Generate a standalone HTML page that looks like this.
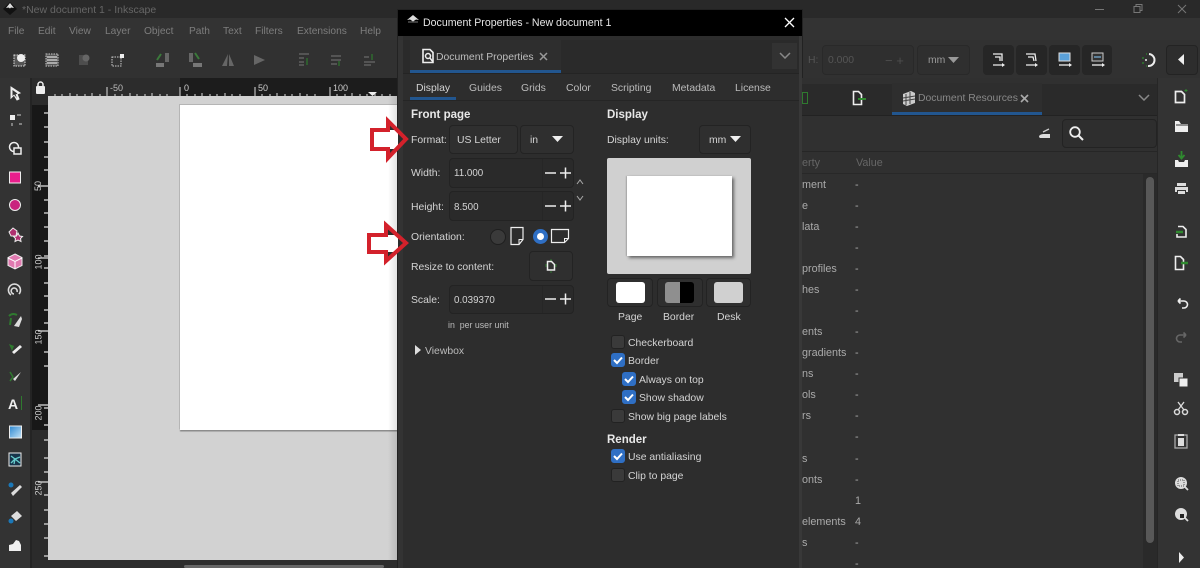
<!DOCTYPE html>
<html><head><meta charset="utf-8"><style>
html,body{margin:0;padding:0;background:#2d2d2d}
#r{position:relative;width:1200px;height:568px;overflow:hidden;background:#2d2d2d;font:10.4px "Liberation Sans",sans-serif;color:#ddd}
#r div,#r span,#r svg{position:absolute}
.t{white-space:nowrap;line-height:14px;height:14px;transform:translateY(-6px)}
.m{color:#7d7d7d;font-size:10.2px;transform:translateY(-5px)}
.d{color:#d4d4d4;transform:translateY(-5px)}
.n{color:#d4d4d4;font-size:9.8px;transform:translateY(-5px)}
.b{font-weight:bold;color:#e8e8e8;font-size:11.5px}
.box{background:#2f2f2f;border:1px solid #232323;border-radius:4px;box-sizing:border-box}
.cb{width:14px;height:14px;border-radius:3px;background:#3a3a3a;border:1px solid #222;box-sizing:border-box}
.ck{background:#2f6fc4;border-color:#2f6fc4}
.v{color:#aaa;font-size:10.8px}
.rl{font-size:9px;color:#ccc;transform:translate(-1px,-7px) rotate(-90deg)}
</style></head><body><div id="r">

<!-- window title bar -->
<div style="left:0;top:0;width:1200px;height:18px;background:#292929"></div>
<svg style="left:2px;top:1px" width="16" height="15" viewBox="0 0 16 15"><path d="M8 1 L15 8 L8 14 L1 8Z" fill="#111"/><path d="M8 2 L12 7 L9 6.500 L8 7.500 L6.500 6.500 L4 7Z" fill="#ddd"/></svg>
<div class="t m" style="left:22px;top:8px;font-size:10.500px;color:#666">*New document 1 - Inkscape</div>
<svg style="left:1090px;top:2px" width="100" height="14" viewBox="0 0 100 14" fill="none" stroke="#777"><path d="M5 7.500H14"/><path d="M44 4.500h6v6h-6zM46 4.500v-2h6v6h-2"/><path d="M88 3l8 8M96 3l-8 8"/></svg>

<!-- menu -->
<div style="left:0;top:18px;width:1200px;height:22px;background:#333"></div>
<div class="t m" style="left:8px;top:30px">File</div>
<div class="t m" style="left:38px;top:30px">Edit</div>
<div class="t m" style="left:69px;top:30px">View</div>
<div class="t m" style="left:105px;top:30px">Layer</div>
<div class="t m" style="left:144px;top:30px">Object</div>
<div class="t m" style="left:189px;top:30px">Path</div>
<div class="t m" style="left:223px;top:30px">Text</div>
<div class="t m" style="left:255px;top:30px">Filters</div>
<div class="t m" style="left:297px;top:30px">Extensions</div>
<div class="t m" style="left:360px;top:30px">Help</div>

<!-- toolbar -->
<div style="left:0;top:40px;width:1200px;height:38px;background:#313131"></div>
<svg style="left:0;top:40px" width="400" height="38" viewBox="0 0 400 38">
<rect x="14" y="15" width="11" height="11" fill="#555" stroke="#ddd" stroke-dasharray="1.500 1"/><circle cx="21" cy="18" r="4" fill="#eee"/>
<rect x="46" y="14" width="12" height="12" fill="#555" stroke="#ccc" stroke-dasharray="1.500 1"/><path d="M47 17h10M47 20h10M47 23h10" stroke="#ddd" stroke-width="1.300"/>
<rect x="79" y="15" width="9" height="10" fill="#4d4d4d"/><circle cx="86" cy="18" r="3.500" fill="#666"/>
<rect x="112" y="17" width="9" height="9" fill="none" stroke="#ccc" stroke-dasharray="1.500 1"/><rect x="120" y="14" width="4" height="4" fill="#eee"/>
<rect x="156" y="23" width="8" height="4" fill="#777"/><rect x="165" y="13" width="4" height="9" fill="#666"/><path d="M157 20l4-6" stroke="#3b7a3b" stroke-width="2"/>
<rect x="189" y="13" width="4" height="9" fill="#666"/><rect x="193" y="23" width="9" height="4" fill="#777"/><path d="M195 13l4 6" stroke="#3b7a3b" stroke-width="2"/>
<path d="M228 14l-6 12h5zM229 14l5 12h-5z" fill="#666"/>
<path d="M254 15l11 5-11 5z" fill="#666"/>
<path d="M299 14h10M299 18h5M299 22h5M299 25h5" stroke="#6a6a6a" stroke-width="1.300"/><path d="M307 25v-7" stroke="#2f6b2f" stroke-width="1.500"/>
<path d="M331 16h10M331 20h10M331 24h6" stroke="#6a6a6a" stroke-width="1.300"/><path d="M339 26v-5" stroke="#2f6b2f" stroke-width="1.500"/>
<path d="M364 22h11M364 25h7M364 17h5" stroke="#6a6a6a" stroke-width="1.300"/><path d="M372 20v-6" stroke="#2f6b2f" stroke-width="1.500"/>
</svg>

<div class="box" style="left:822px;top:45px;width:92px;height:30px;border-color:#292929"></div>
<div class="t" style="left:808px;top:60px;color:#555">H:</div>
<div class="t" style="left:828px;top:60px;color:#555">0.000</div>
<div class="t" style="left:885px;top:60px;color:#4d4d4d;font-size:13px">− +</div>
<div class="box" style="left:917px;top:45px;width:53px;height:30px;border-color:#292929"></div>
<div class="t" style="left:928px;top:60px;color:#999">mm</div>
<svg style="left:948px;top:57px" width="12" height="7"><path d="M0 0h11l-5.500 6z" fill="#999"/></svg>
<div style="left:983px;top:45px;width:31px;height:30px;background:#262626;border-radius:4px"></div>
<div style="left:1016px;top:45px;width:31px;height:30px;background:#262626;border-radius:4px"></div>
<div style="left:1049px;top:45px;width:31px;height:30px;background:#262626;border-radius:4px"></div>
<div style="left:1082px;top:45px;width:30px;height:30px;background:#262626;border-radius:4px"></div>
<svg style="left:983px;top:45px" width="130" height="30" viewBox="0 0 130 30" fill="none">
<path d="M10 9h9v7M12 12h5v4M10 20h10" stroke="#eee" stroke-width="1.300"/><path d="M19 18l3 2-3 2z" fill="#eee"/>
<path d="M43 9h9l1 7M45 12h5l1 4M43 20h10" stroke="#eee" stroke-width="1.300"/><path d="M52 18l3 2-3 2z" fill="#eee"/>
<rect x="76" y="8" width="11" height="8" fill="#5aa0d8" stroke="#ddd"/><path d="M76 20h11" stroke="#eee" stroke-width="1.300"/><path d="M86 18l3 2-3 2z" fill="#eee"/>
<rect x="109" y="8" width="11" height="8" fill="#333" stroke="#ccc"/><path d="M111 12h7" stroke="#8cf"/><path d="M109 20h11" stroke="#eee" stroke-width="1.300"/><path d="M119 18l3 2-3 2z" fill="#eee"/>
</svg>
<svg style="left:1141px;top:51px" width="18" height="18" viewBox="0 0 18 18" fill="none"><path d="M8 3a6 6 0 1 1-1 12" stroke="#eee" stroke-width="2"/><path d="M4 9h2" stroke="#eee" stroke-width="1.500"/><path d="M2 6v2M2 11v2M5 15h1M5 3h1" stroke="#2f7a2f" stroke-width="1.500"/></svg>
<div class="box" style="left:1166px;top:45px;width:32px;height:30px;background:#2d2d2d"></div>
<svg style="left:1178px;top:54px" width="8" height="12"><path d="M6 0v11L0 5.500z" fill="#eee"/></svg>

<!-- left toolbox -->
<div style="left:0;top:78px;width:30px;height:490px;background:#333"></div>
<div style="left:30px;top:78px;width:2px;height:490px;background:#242424"></div>
<svg style="left:0;top:78px" width="30" height="490" viewBox="0 78 30 490">
<defs><linearGradient id="g" x1="0" y1="0" x2="1" y2="1"><stop offset="0" stop-color="#2a86d0"/><stop offset="1" stop-color="#c5e4f7"/></linearGradient></defs>
<path d="M11 87l9 6-3 1 2 5-2 1-3-5-3 3z" fill="#eee" stroke="#eee"/><path d="M12.500 90l5 3.500-2 1 1.500 3.500-3-3.500-1.500 1.500z" fill="#333"/>
<rect x="10" y="115" width="5" height="5" fill="#eee"/><path d="M17 115h4M19 124h3M12 123v3" stroke="#ccc"/>
<circle cx="14" cy="147" r="4.500" fill="none" stroke="#eee" stroke-width="1.500"/><rect x="14" y="148" width="7" height="6" fill="#333" stroke="#eee" stroke-width="1.500"/>
<rect x="9.500" y="172" width="11" height="11" fill="#e91e8c" stroke="#eee"/>
<circle cx="15" cy="205" r="5.500" fill="#c9237e" stroke="#eee"/>
<path d="M9 232l4-4 4 3-1 5h-5z" fill="#b03070" stroke="#eee"/><path d="M18 233l1.500 3 3 .5-2 2 .5 3-3-1.500-3 1.500.5-3-2-2 3-.5z" fill="#b03070" stroke="#eee"/>
<path d="M15 254l7 3.500v8L15 269l-7-3.500v-8z" fill="#e07ab0" stroke="#eee"/><path d="M8 258l7 3.500 7-3.500M15 261.500v7" stroke="#fff" fill="none"/>
<path d="M19 294a6 6 0 1 0-8 1M17 292a3 3 0 1 0-3 2" fill="none" stroke="#ddd" stroke-width="1.600"/>
<path d="M14 326l7-10 1 3-3 8z" fill="#ddd"/><path d="M9 316c3-3 6-2 8-1M11 318l-1 7" stroke="#2f7a2f" stroke-width="2" fill="none"/>
<path d="M12 352l8-7 2 2-8 7z" fill="#eee"/><path d="M9 344l5 2-2 5z" fill="#2f7a2f"/>
<path d="M13 379l8-7-6 9z" fill="#ddd"/><path d="M10 372l3 5-3 4" stroke="#2f7a2f" stroke-width="1.500" fill="none"/>
<rect x="9.500" y="426" width="12" height="12" fill="url(#g)" stroke="#eee"/>
<rect x="9" y="453" width="12" height="13" fill="#17344a" stroke="#eee"/><path d="M15 459l-4-3M15 459l5-2M15 459l-1 5M15 459l5 4M15 459l-4 4" stroke="#6cc" stroke-width="1.300"/>
<path d="M11 493l9-8 2 2-9 9z" fill="#ddd"/><circle cx="11" cy="485" r="2.500" fill="#1b78b8"/>
<path d="M11 516l6-5 5 5-6 5z" fill="#ddd"/><circle cx="11" cy="521" r="2.500" fill="#1b78b8"/>
<path d="M9 551v-6l4-1 3-4 3 1 2 4v6z" fill="#eee"/>
</svg>
<div class="t" style="left:8px;top:403px;font-size:14px;font-weight:bold;color:#eee">A</div>
<div style="left:21px;top:396px;width:1px;height:14px;background:#2f7a2f"></div>

<!-- rulers -->
<div style="left:32px;top:78px;width:368px;height:18px;background:#2c2c2c"></div>
<div style="left:180px;top:78px;width:220px;height:18px;background:#1c1c1c"></div>
<div style="left:32px;top:96px;width:16px;height:464px;background:#2b2b2b"></div>
<div style="left:32px;top:105px;width:16px;height:325px;background:#181818"></div>
<svg style="left:32px;top:78px" width="368" height="482" viewBox="32 78 368 482">
<path d="M55 96v-2M62 96v-2M70 96v-3M77 96v-2M85 96v-2M92 96v-3M100 96v-2M107 96v-9M115 96v-2M122 96v-2M130 96v-3M137 96v-2M145 96v-2M152 96v-3M160 96v-2M167 96v-2M180 96v-9M187 96v-2M195 96v-2M202 96v-3M210 96v-2M217 96v-2M225 96v-3M232 96v-2M240 96v-2M255 96v-9M262 96v-2M270 96v-2M277 96v-3M285 96v-2M292 96v-2M300 96v-3M307 96v-2M315 96v-2M330 96v-9M337 96v-2M345 96v-2M352 96v-3M360 96v-2M367 96v-2M375 96v-3M382 96v-2M390 96v-2" stroke="#ddd"/>
<path d="M368 92h9l-4.500 4z" fill="#eee"/>
<path d="M44 113h4M44 127h4M44 142h4M44 157h4M44 170h4M38 186h10M44 200h4M44 213h4M44 227h4M44 241h4M44 256h4M38 258h10M44 268h4M44 283h4M44 296h4M44 310h4M44 323h4M38 331h10M44 352h4M44 366h4M38 405h10M44 408h4M44 425h4M44 440h4M44 458h4M44 472h4M38 482h10M44 495h4M44 510h4M44 524h4M44 538h4M44 556h4" stroke="#ddd" stroke-width="1.200"/>
</svg>
<div class="t" style="left:110px;top:88px;font-size:9px;color:#bbb;transform:translateY(-7px)">-50</div>
<div class="t" style="left:184px;top:88px;font-size:9px;color:#ccc;transform:translateY(-7px)">0</div>
<div class="t" style="left:258px;top:88px;font-size:9px;color:#ccc;transform:translateY(-7px)">50</div>
<div class="t" style="left:333px;top:88px;font-size:9px;color:#ccc;transform:translateY(-7px)">100</div>
<div class="t rl" style="left:34px;top:186px">50</div>
<div class="t rl" style="left:32px;top:262px">100</div>
<div class="t rl" style="left:32px;top:337px">150</div>
<div class="t rl" style="left:32px;top:413px">200</div>
<div class="t rl" style="left:32px;top:488px">250</div>
<svg style="left:35px;top:81px" width="11" height="13" viewBox="0 0 11 13"><rect x="1" y="5" width="9" height="8" rx="1" fill="#eee"/><path d="M3 6V3.500a2.500 2.500 0 0 1 5 0V6" fill="none" stroke="#eee" stroke-width="1.500"/></svg>

<!-- canvas -->
<div style="left:48px;top:96px;width:352px;height:464px;background:#d2d2d2"></div>
<div style="left:180px;top:105px;width:220px;height:325px;background:#fff;box-shadow:-1px -1px 0 #b5b5b5,0 1.500px 1px #8a8a8a"></div>
<div style="left:388px;top:96px;width:10px;height:464px;background:linear-gradient(90deg,rgba(0,0,0,0),rgba(0,0,0,.12))"></div>
<div style="left:48px;top:560px;width:352px;height:8px;background:#2d2d2d"></div>
<div style="left:184px;top:565px;width:200px;height:3px;background:#666;border-radius:2px"></div>

<!-- dialog -->
<div style="left:398px;top:10px;width:404px;height:558px;background:#2d2d2d;box-shadow:0 0 0 1px #222"></div>
<div style="left:398px;top:10px;width:404px;height:26px;background:#000"></div>
<svg style="left:406px;top:15px" width="14" height="10" viewBox="0 0 14 10"><path d="M7 0l6 5-3-.500-3 2-3-2-3 .500z" fill="#ddd"/><path d="M2 7h10" stroke="#777"/></svg>
<div class="t" style="left:423px;top:22px;color:#e6e6e6;font-size:10.600px">Document Properties - New document 1</div>
<svg style="left:784px;top:17px" width="11" height="11"><path d="M1 1l9 9M10 1l-9 9" stroke="#fff" stroke-width="1.300"/></svg>

<div style="left:398px;top:36px;width:5px;height:532px;background:#333"></div>
<div style="left:403px;top:40px;width:396px;height:33px;background:#2a2a2a"></div>
<div style="left:410px;top:40px;width:151px;height:33px;background:#2e2e2e"></div>
<div style="left:410px;top:70px;width:151px;height:3px;background:#22568f"></div>
<div style="left:403px;top:73px;width:396px;height:1px;background:#242424"></div>
<svg style="left:421px;top:48px" width="14" height="16" viewBox="0 0 14 16" fill="none"><path d="M2 1.500h7l3 3v10H2z" stroke="#eee" stroke-width="1.600"/><circle cx="7" cy="8" r="2.500" stroke="#eee" stroke-width="1.500"/><path d="M9 10l3 4" stroke="#eee" stroke-width="1.500"/></svg>
<div class="t d" style="left:436px;top:56px;color:#bdbdbd">Document Properties</div>
<svg style="left:539px;top:52px" width="9" height="9"><path d="M1 1l7 7M8 1l-7 7" stroke="#999" stroke-width="1.500"/></svg>
<div style="left:772px;top:43px;width:25px;height:26px;background:#323232"></div>
<svg style="left:779px;top:52px" width="12" height="7"><path d="M1 1l5 5 5-5" fill="none" stroke="#888" stroke-width="1.500"/></svg>

<div class="t d" style="left:416px;top:87px">Display</div>
<div class="t d" style="left:469px;top:87px;color:#bbb">Guides</div>
<div class="t d" style="left:521px;top:87px;color:#bbb">Grids</div>
<div class="t d" style="left:566px;top:87px;color:#bbb">Color</div>
<div class="t d" style="left:611px;top:87px;color:#bbb">Scripting</div>
<div class="t d" style="left:672px;top:87px;color:#bbb">Metadata</div>
<div class="t d" style="left:735px;top:87px;color:#bbb">License</div>
<div style="left:410px;top:97px;width:46px;height:3px;background:#22568f"></div>
<div style="left:403px;top:100px;width:396px;height:1px;background:#252525"></div>

<div class="t b" style="left:411px;top:114px">Front page</div>
<div class="t b" style="left:607px;top:114px">Display</div>

<div class="t d" style="left:411px;top:139px">Format:</div>
<div class="box" style="left:449px;top:125px;width:69px;height:29px"></div>
<div class="t d" style="left:457px;top:139px">US Letter</div>
<div class="box" style="left:520px;top:125px;width:54px;height:29px"></div>
<div class="t d" style="left:530px;top:139px">in</div>
<svg style="left:552px;top:136px" width="11" height="6"><path d="M0 0h11L5.500 6z" fill="#eee"/></svg>

<div class="t d" style="left:411px;top:172px">Width:</div>
<div class="box" style="left:449px;top:158px;width:125px;height:30px;background:#2a2a2a"></div>
<div class="t n" style="left:454px;top:172px">11.000</div>
<div style="left:542px;top:159px;width:1px;height:28px;background:#262626"></div>
<svg style="left:544px;top:166px" width="28" height="14"><path d="M1 7h11M16 7h11M21.500 1.500v11" stroke="#eee" stroke-width="1.500"/></svg>

<svg style="left:576px;top:178px" width="8" height="24"><path d="M1 6l3-4 3 4M1 18l3 4 3-4" fill="none" stroke="#aaa"/></svg>

<div class="t d" style="left:411px;top:206px">Height:</div>
<div class="box" style="left:449px;top:191px;width:125px;height:30px;background:#2a2a2a"></div>
<div class="t n" style="left:454px;top:206px">8.500</div>
<div style="left:542px;top:192px;width:1px;height:28px;background:#262626"></div>
<svg style="left:544px;top:199px" width="28" height="14"><path d="M1 7h11M16 7h11M21.500 1.500v11" stroke="#eee" stroke-width="1.500"/></svg>

<div class="t d" style="left:411px;top:236px">Orientation:</div>
<div style="left:490px;top:229px;width:14px;height:14px;border-radius:50%;background:#3a3a3a;border:1px solid #1f1f1f"></div>
<svg style="left:509px;top:226px" width="16" height="20" viewBox="0 0 16 20" fill="none"><path d="M2 1.500h12v12l-4 5H2z" stroke="#eee" stroke-width="1.200"/><path d="M14 13.500h-4v5" stroke="#eee"/></svg>
<div style="left:533px;top:229px;width:15px;height:15px;border-radius:50%;background:#2f6fc4"></div>
<div style="left:537px;top:233px;width:7px;height:7px;border-radius:50%;background:#fff"></div>
<svg style="left:550px;top:228px" width="20" height="16" viewBox="0 0 20 16" fill="none"><path d="M1.500 1.500h17v9l-4 4h-13z" stroke="#eee" stroke-width="1.200"/><path d="M18.500 10.500h-4v4" stroke="#eee"/></svg>

<div class="t d" style="left:411px;top:266px">Resize to content:</div>
<div class="box" style="left:529px;top:251px;width:44px;height:30px"></div>
<svg style="left:544px;top:259px" width="14" height="14" viewBox="0 0 14 14"><path d="M3.500 2.500h4l3 3v5.500h-7z" fill="#333" stroke="#eee" stroke-width="1.500"/><path d="M2 5v3M12 5v3M6 1h2M6 13h2" stroke="#2f7a2f"/></svg>

<div class="t d" style="left:411px;top:299px">Scale:</div>
<div class="box" style="left:449px;top:285px;width:125px;height:29px;background:#2a2a2a"></div>
<div class="t n" style="left:454px;top:299px">0.039370</div>
<div style="left:542px;top:286px;width:1px;height:27px;background:#262626"></div>
<svg style="left:544px;top:292px" width="28" height="14"><path d="M1 7h11M16 7h11M21.500 1.500v11" stroke="#eee" stroke-width="1.500"/></svg>
<div class="t" style="left:448px;top:324px;font-size:8.800px;color:#bbb">in&nbsp; per user unit</div>
<svg style="left:415px;top:345px" width="6" height="10"><path d="M0 0l6 5-6 5z" fill="#ddd"/></svg>
<div class="t d" style="left:425px;top:350px;color:#bbb">Viewbox</div>

<div class="t d" style="left:607px;top:139px">Display units:</div>
<div class="box" style="left:699px;top:125px;width:52px;height:29px"></div>
<div class="t d" style="left:709px;top:139px">mm</div>
<svg style="left:730px;top:136px" width="11" height="6"><path d="M0 0h11L5.500 6z" fill="#eee"/></svg>

<div style="left:607px;top:158px;width:144px;height:116px;background:#d0d0d0;border-radius:2px"></div>
<div style="left:627px;top:176px;width:105px;height:80px;background:#fff;box-shadow:2px 2px 3px #666,-1px 0 1px #aaa"></div>

<div class="box" style="left:607px;top:278px;width:46px;height:29px"></div>
<div style="left:616px;top:282px;width:29px;height:21px;background:#fff;border-radius:3px"></div>
<div class="box" style="left:657px;top:278px;width:46px;height:29px"></div>
<div style="left:665px;top:282px;width:15px;height:21px;background:#8f8f8f;border-radius:3px 0 0 3px"></div>
<div style="left:680px;top:282px;width:14px;height:21px;background:#000;border-radius:0 3px 3px 0"></div>
<div class="box" style="left:706px;top:278px;width:45px;height:29px"></div>
<div style="left:714px;top:282px;width:29px;height:21px;background:#d0d0d0;border-radius:3px"></div>
<div class="t d" style="left:618px;top:316px">Page</div>
<div class="t d" style="left:663px;top:316px">Border</div>
<div class="t d" style="left:717px;top:316px">Desk</div>

<div class="cb" style="left:611px;top:335px"></div>
<div class="t d" style="left:628px;top:342px">Checkerboard</div>
<div class="cb ck" style="left:611px;top:353px"></div>
<svg style="left:611px;top:353px" width="14" height="14"><path d="M3 7l3 3 5-5.500" fill="none" stroke="#fff" stroke-width="2"/></svg>
<div class="t d" style="left:628px;top:360px">Border</div>
<div class="cb ck" style="left:622px;top:372px"></div>
<svg style="left:622px;top:372px" width="14" height="14"><path d="M3 7l3 3 5-5.500" fill="none" stroke="#fff" stroke-width="2"/></svg>
<div class="t d" style="left:639px;top:379px">Always on top</div>
<div class="cb ck" style="left:622px;top:390px"></div>
<svg style="left:622px;top:390px" width="14" height="14"><path d="M3 7l3 3 5-5.500" fill="none" stroke="#fff" stroke-width="2"/></svg>
<div class="t d" style="left:639px;top:397px">Show shadow</div>
<div class="cb" style="left:611px;top:409px"></div>
<div class="t d" style="left:628px;top:416px">Show big page labels</div>
<div class="t b" style="left:607px;top:439px">Render</div>
<div class="cb ck" style="left:611px;top:449px"></div>
<svg style="left:611px;top:449px" width="14" height="14"><path d="M3 7l3 3 5-5.500" fill="none" stroke="#fff" stroke-width="2"/></svg>
<div class="t d" style="left:628px;top:456px">Use antialiasing</div>
<div class="cb" style="left:611px;top:468px"></div>
<div class="t d" style="left:628px;top:475px">Clip to page</div>
<div style="left:799px;top:36px;width:3px;height:532px;background:#383838"></div>

<!-- red arrows, drawn over the dialog edge -->
<svg style="left:360px;top:110px" width="52" height="160" viewBox="360 110 52 160">
<path d="M398 130h-26v19h26z" fill="#fff"/>
<path d="M398 130v19h-10v9l18-19-18-18v9z" fill="#2d2d2d"/>
<path d="M388 130v19h10v-19z" fill="#fff"/>
<path d="M372 130h16v-9l18 18-18 19v-9h-16z" fill="none" stroke="#d3212b" stroke-width="4"/>
<path d="M398 235h-29v17h29z" fill="#fff"/>
<path d="M398 235v17h-12v9l20-18-20-18v10z" fill="#2d2d2d"/>
<path d="M386 235v17h12v-17z" fill="#fff"/>
<path d="M369 235h17v-10l20 18-20 18v-9h-17z" fill="none" stroke="#d3212b" stroke-width="4"/>
</svg>

<!-- right dock -->
<div style="left:802px;top:78px;width:355px;height:490px;background:#303030"></div>
<div style="left:802px;top:84px;width:355px;height:31px;background:#2a2a2a"></div>
<div style="left:892px;top:83px;width:150px;height:32px;background:#2e2e2e"></div>
<div style="left:892px;top:112px;width:150px;height:3px;background:#22568f"></div>
<div style="left:802px;top:115px;width:355px;height:1px;background:#222"></div>
<div style="left:802px;top:92px;width:6px;height:12px;border:1px solid #2f7a2f;box-sizing:border-box"></div>
<svg style="left:851px;top:90px" width="16" height="16" viewBox="0 0 16 16" fill="none"><path d="M2.500 1.500h5l3 3v10h-8z" stroke="#eee" stroke-width="1.600"/><path d="M7 9h8" stroke="#2f8a2f" stroke-width="2"/></svg>
<svg style="left:902px;top:90px" width="14" height="16" viewBox="0 0 14 16"><path d="M1 4l8-3 4 2v10l-8 3-4-2z" fill="#ccc"/><path d="M4 4v11M8 2v12M1 8l12-2M1 11l12-2" stroke="#444"/></svg>
<div class="t" style="left:918px;top:98px;color:#888">Document Resources</div>
<svg style="left:1020px;top:94px" width="9" height="9"><path d="M1 1l7 7M8 1l-7 7" stroke="#aaa" stroke-width="1.600"/></svg>
<svg style="left:1138px;top:94px" width="12" height="7"><path d="M1 1l5 5 5-5" fill="none" stroke="#888" stroke-width="1.500"/></svg>
<svg style="left:1037px;top:126px" width="16" height="16" viewBox="0 0 16 16"><path d="M2 11c0-3 4-3 7-3h4v4H3z" fill="#ddd"/><path d="M6 6l6-3" stroke="#ccc" stroke-width="1.300"/></svg>
<div class="box" style="left:1062px;top:119px;width:95px;height:29px;background:#2e2e2e"></div>
<svg style="left:1068px;top:125px" width="17" height="17" viewBox="0 0 17 17" fill="none"><circle cx="7" cy="7" r="4.800" stroke="#eee" stroke-width="1.800"/><path d="M10.500 10.500l4.500 4.500" stroke="#eee" stroke-width="2"/></svg>
<div style="left:802px;top:151px;width:355px;height:1px;background:#262626"></div>
<div class="t" style="left:802px;top:162px;color:#666;font-size:10.800px">erty</div>
<div class="t" style="left:856px;top:162px;color:#666;font-size:10.800px">Value</div>
<div style="left:802px;top:173px;width:355px;height:1px;background:#282828"></div>
<div style="left:1143px;top:174px;width:14px;height:394px;background:#2a2a2a"></div>
<div style="left:1146px;top:177px;width:8px;height:366px;background:#585858;border-radius:4px"></div>

<div class="t v" style="left:802px;top:184px">ment</div><div class="t v" style="left:855px;top:184px">-</div>
<div class="t v" style="left:802px;top:205px">e</div><div class="t v" style="left:855px;top:205px">-</div>
<div class="t v" style="left:802px;top:226px">lata</div><div class="t v" style="left:855px;top:226px">-</div>
<div class="t v" style="left:855px;top:247px">-</div>
<div class="t v" style="left:802px;top:268px">profiles</div><div class="t v" style="left:855px;top:268px">-</div>
<div class="t v" style="left:802px;top:289px">hes</div><div class="t v" style="left:855px;top:289px">-</div>
<div class="t v" style="left:855px;top:310px">-</div>
<div class="t v" style="left:802px;top:331px">ents</div><div class="t v" style="left:855px;top:331px">-</div>
<div class="t v" style="left:802px;top:352px">gradients</div><div class="t v" style="left:855px;top:352px">-</div>
<div class="t v" style="left:802px;top:373px">ns</div><div class="t v" style="left:855px;top:373px">-</div>
<div class="t v" style="left:802px;top:394px">ols</div><div class="t v" style="left:855px;top:394px">-</div>
<div class="t v" style="left:802px;top:415px">rs</div><div class="t v" style="left:855px;top:415px">-</div>
<div class="t v" style="left:855px;top:436px">-</div>
<div class="t v" style="left:802px;top:458px">s</div><div class="t v" style="left:855px;top:458px">-</div>
<div class="t v" style="left:802px;top:479px">onts</div><div class="t v" style="left:855px;top:479px">-</div>
<div class="t v" style="left:855px;top:500px">1</div>
<div class="t v" style="left:802px;top:521px">elements</div><div class="t v" style="left:855px;top:521px">4</div>
<div class="t v" style="left:802px;top:542px">s</div><div class="t v" style="left:855px;top:542px">-</div>
<div class="t v" style="left:855px;top:563px">-</div>

<!-- right toolbar -->
<div style="left:1157px;top:78px;width:43px;height:490px;background:#333;border-left:1px solid #262626;box-sizing:border-box"></div>
<svg style="left:1157px;top:78px" width="43" height="490" viewBox="1157 78 43 490" fill="none">
<path d="M1175.500 91.500h6l3 3v8h-9z" stroke="#eee" stroke-width="1.700"/><path d="M1186 89v3M1184.500 90.500h3" stroke="#2f8a2f"/>
<path d="M1175 121v11h13v-8h-7l-2-3z" fill="#eee"/><path d="M1176 125h12" stroke="#333"/>
<path d="M1175 160v7h13v-7h-3l-1 2h-5l-1-2z" fill="#eee"/><path d="M1181.500 151v7M1178.500 155l3 3.500 3-3.500" stroke="#2f8a2f" stroke-width="1.800"/>
<path d="M1177 186v-3h9v3zM1175 187h13v5h-2v-2h-9v2h-2zM1178 191h7v3h-7z" fill="#ddd"/>
<path d="M1178 226.500h5l3 3v7.500h-9v-3" stroke="#eee" stroke-width="1.600"/><path d="M1176 232h7" stroke="#2f8a2f" stroke-width="2.500"/>
<path d="M1175.500 256.500h5l3 3v10h-8z" stroke="#eee" stroke-width="1.600"/><path d="M1181 263h7" stroke="#2f8a2f" stroke-width="2.500"/>
<path d="M1178 301h6a3 3 0 0 1 0 7h-2M1178 301l2.500-2.500M1178 301l2.500 2.500" stroke="#eee" stroke-width="1.600"/>
<path d="M1186 335h-6a3 3 0 0 0 0 7h2M1186 335l-2.500-2.500M1186 335l-2.500 2.500" stroke="#666" stroke-width="1.600"/>
<rect x="1174" y="373" width="9" height="9" fill="#ccc"/><rect x="1179" y="378" width="9" height="9" fill="#eee" stroke="#333"/>
<circle cx="1177" cy="412" r="2.500" stroke="#ddd" stroke-width="1.500"/><circle cx="1185" cy="412" r="2.500" stroke="#ddd" stroke-width="1.500"/><path d="M1178 410l6-8M1184 410l-6-8" stroke="#ddd" stroke-width="1.300"/>
<rect x="1175" y="435" width="12" height="13" stroke="#aaa" stroke-width="1.300"/><path d="M1178 436h6v-2h-6zM1178 438h6v8h-6z" fill="#ddd"/>
<circle cx="1181" cy="483" r="6" fill="#ddd"/><path d="M1178 480h6v6h-6z" stroke="#555" stroke-dasharray="1 1"/><path d="M1185 487l3 3" stroke="#ddd" stroke-width="1.800"/>
<circle cx="1181" cy="514" r="6" fill="#ddd"/><rect x="1180" y="514" width="4" height="4" fill="#222"/><path d="M1185 518l3 3" stroke="#ddd" stroke-width="1.800"/>
<path d="M1179 552v11l5-5.500z" fill="#eee"/>
</svg>
</div></body></html>
